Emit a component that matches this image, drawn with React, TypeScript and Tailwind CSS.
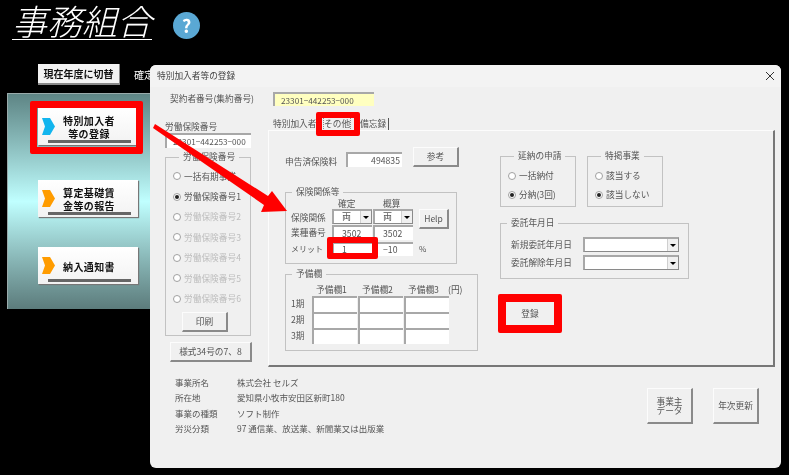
import React from "react";

const raised = "bg-[#f0f0f0] border-t border-l border-t-[#fcfcfc] border-l-[#fcfcfc] border-r-2 border-b-2 border-r-[#8a8a8a] border-b-[#8a8a8a] flex items-center justify-center text-[#555]";
const sunken = "bg-white border-t-2 border-l-2 border-t-[#a8a8a8] border-l-[#a8a8a8] flex items-center text-[#555]";

function Group({ title, className, children }: { title: string; className: string; children?: React.ReactNode }) {
  return (
    <fieldset className={`border border-[#c2c2c2] min-w-0 ${className}`}>
      <legend className="ml-[6px] px-[4px] h-[12px] leading-[12px] text-[8.7px] text-[#555]">{title}</legend>
      {children}
    </fieldset>
  );
}

function Radio({ label, checked, disabled, h = "h-[20.4px]" }: { label: string; checked?: boolean; disabled?: boolean; h?: string }) {
  return (
    <div className={`flex items-center gap-[3px] ${h} text-[8.7px] ${disabled ? "text-[#bdbdbd]" : "text-[#555]"}`}>
      <span className="w-[8px] h-[8px] rounded-full bg-white border border-[#a0a0a0] flex items-center justify-center shrink-0">
        {checked && <span className="w-[4px] h-[4px] rounded-full bg-[#222]" />}
      </span>
      <span className="whitespace-nowrap">{label}</span>
    </div>
  );
}

function Select({ value, className }: { value?: string; className: string }) {
  return (
    <div className={`${sunken} justify-between border-r border-b border-r-[#8a8a8a] border-b-[#8a8a8a] ${className}`}>
      <span className="pl-[8px] text-[9px]">{value}</span>
      <span className="w-[11px] h-full bg-[#f0f0f0] border-l border-[#cfcfcf] flex items-center justify-center">
        <span className="w-0 h-0 border-l-[3px] border-r-[3px] border-t-[3px] border-l-transparent border-r-transparent border-t-black" />
      </span>
    </div>
  );
}

function Input({ value, className, right }: { value?: string; className: string; right?: boolean }) {
  return (
    <div className={`${sunken} ${right ? "justify-end pr-[2px]" : ""} ${className}`}>{value}</div>
  );
}

function MenuButton({ lines, color, className }: { lines: string[]; color: string; className: string }) {
  return (
    <div className={`relative w-[100px] h-[37px] bg-gradient-to-b from-white to-[#f2f2f2] shadow-[1px_1px_1px_#777] ${className}`}>
      <svg className="absolute left-[4px] top-[10px]" width="13" height="17" viewBox="0 0 13 17">
        <polygon points="0,0 8,0 13,8.5 8,17 0,17 3,8.5" fill={color} />
      </svg>
      <div className="absolute left-[24px] top-[6px] w-[54px] h-[26px] flex flex-col items-center justify-center text-[10px] leading-[13px] font-bold text-[#111] tracking-[0.4px]">
        {lines.map((l) => (
          <span key={l} className="whitespace-nowrap">{l}</span>
        ))}
      </div>
      <div className="absolute left-[10px] bottom-[2px] w-[83px] h-[3px] bg-[#666]" />
    </div>
  );
}

export default function App() {
  const reserve = ["1期", "2期", "3期"];
  const cell = "h-[15.5px] mr-[1px] bg-white border-t-2 border-l-2 border-[#a8a8a8]";
  return (
    <div
      className="relative w-[789px] h-[475px] bg-black overflow-hidden blur-[0.35px]"
      style={{ fontFamily: '"Noto Sans CJK JP", "Noto Sans", sans-serif' }}
    >
      {/* App header */}
      <div className="flex items-start pl-[12px] pt-[1px] h-[60px]">
        <div className="border-b border-white text-[35px] leading-[38px] text-white italic font-light whitespace-nowrap">事務組合</div>
        <div className="ml-[21px] mt-[11px] w-[27px] h-[27px] rounded-full bg-[#5aa8d4] flex items-center justify-center text-white font-bold text-[18px]">?</div>
      </div>
      <div className="flex items-center pl-[38px] mt-[4px]">
        <div className="w-[82px] h-[21px] bg-[#f2f2f2] border-b-2 border-r border-[#888] flex items-center justify-center text-[10px] font-bold text-[#111] whitespace-nowrap">現在年度に切替</div>
        <span className="ml-[14px] text-[10px] text-white">確定</span>
      </div>

      {/* Teal menu panel */}
      <div className="absolute left-[7px] top-[93px] w-[150px] h-[216px] bg-gradient-to-b from-[#5e8585] via-[#c0ffff] via-50% to-[#5c7c7c] border-t border-l border-[#9aa]">
        <MenuButton lines={["特別加入者", "等の登録"]} color="#12b5ee" className="ml-[30px] mt-[14px]" />
        <MenuButton lines={["算定基礎賃", "金等の報告"]} color="#ff9c00" className="ml-[30px] mt-[35px]" />
        <MenuButton lines={["納入通知書"]} color="#ff9c00" className="ml-[30px] mt-[30px]" />
      </div>

      {/* Dialog window */}
      <div className="absolute left-[150px] top-[65px] w-[631px] h-[403px] bg-[#f0f0f0] rounded-[6px] text-[#555] overflow-hidden">
        <div className="h-[22px] bg-[#f3f3f3] flex items-center justify-between pl-[7px] pr-[5px]">
          <span className="text-[8.7px] text-[#444]">特別加入者等の登録</span>
          <svg width="10" height="10" viewBox="0 0 10 10" className="mr-[1px]">
            <path d="M1 1 L9 9 M9 1 L1 9" stroke="#333" strokeWidth="1" fill="none" />
          </svg>
        </div>

        <div className="flex items-center h-[14px] mt-[5px] text-[8.7px]">
          <span className="ml-[20px] w-[103px] whitespace-nowrap">契約者番号(集約番号)</span>
          <div className="w-[101px] h-[14px] pl-[6px] bg-[#ffffc0] border-t-2 border-l-2 border-[#a8a8a8] flex items-center text-[8.2px]">23301−442253−000</div>
        </div>

        <div className="flex">
          {/* Left column */}
          <div className="w-[118px] pl-[15px] shrink-0">
            <div className="mt-[14px] h-[13px] leading-[13px] text-[8.7px] whitespace-nowrap">労働保険番号</div>
            <Input value="23301−442253−000" className="w-[86px] h-[15px] text-[8.2px] pl-[6px]" />
            <Group title="労働保険番号" className="mt-[3px] w-[86px] h-[185px] pl-[7px]">
              <div className="pt-[3px]">
                <Radio label="一括有期事業" />
                <Radio label="労働保険番号1" checked />
                <Radio label="労働保険番号2" disabled />
                <Radio label="労働保険番号3" disabled />
                <Radio label="労働保険番号4" disabled />
                <Radio label="労働保険番号5" disabled />
                <Radio label="労働保険番号6" disabled />
              </div>
              <div className={`${raised} ml-[9px] mt-[3px] w-[46px] h-[20px] text-[8.7px]`}>印刷</div>
            </Group>
            <div className={`${raised} ml-[5px] mt-[6px] w-[82px] h-[20px] text-[8.7px] whitespace-nowrap`}>様式34号の7、8</div>
          </div>

          {/* Tabs + panel */}
          <div className="w-[507px] mt-[12px]">
            <div className="flex h-[12px] text-[8.7px] leading-[12px] pl-[5px]">
              <span className="w-[51px] whitespace-nowrap">特別加入者</span>
              <span className="w-[36px] whitespace-nowrap">
                <span className="outline-1 outline-dotted outline-[#888]">その他</span>
              </span>
              <span className="w-[29px] whitespace-nowrap border-r border-[#555]">備忘録</span>
            </div>
            <div className="h-[237px] border-t border-l border-t-[#fcfcfc] border-l-[#fcfcfc] border-r-2 border-b-2 border-r-[#777] border-b-[#777] flex">
              <div className="w-[231px] shrink-0">
                <div className="flex items-start mt-[16px] h-[20px] text-[8.7px]">
                  <span className="ml-[16px] mt-[9px] w-[61px] whitespace-nowrap leading-[12px]">申告済保険料</span>
                  <Input value="494835" right className="mt-[5px] w-[56px] h-[15px] text-[8.7px]" />
                  <div className={`${raised} ml-[11px] w-[46px] h-[20px]`}>参考</div>
                </div>
                <Group title="保険関係等" className="ml-[16px] mt-[19px] w-[172px] h-[78px]">
                  <div className="flex pl-[52px] h-[11px] leading-[11px] text-[8.7px]">
                    <span className="w-[45px]">確定</span>
                    <span>概算</span>
                  </div>
                  <div className="flex items-start pl-[5px] text-[8.7px]">
                    <span className="w-[41px] mt-[3px] leading-[12px]">保険関係</span>
                    <Select value="両" className="w-[40px] h-[15px] mr-[1px]" />
                    <Select value="両" className="w-[40px] h-[15px]" />
                    <div className={`${raised} ml-[6px] w-[30px] h-[20px] text-[8.5px]`}>Help</div>
                  </div>
                  <div className="flex items-center pl-[5px] mt-[-4px] h-[15px] text-[8.7px]">
                    <span className="w-[41px]">業種番号</span>
                    <Input value="3502" className="w-[40px] h-[15px] mr-[1px] pl-[8px]" />
                    <Input value="3502" className="w-[40px] h-[15px] pl-[8px]" />
                  </div>
                  <div className="flex items-center pl-[5px] mt-[1px] h-[15px] text-[8.7px]">
                    <span className="w-[41px] text-[8px]">メリット</span>
                    <Input value="1" className="w-[40px] h-[14px] mr-[1px] pl-[8px]" />
                    <Input value="−10" className="w-[40px] h-[14px] pl-[8px]" />
                    <span className="ml-[6px] text-[8px]">%</span>
                  </div>
                </Group>
                <Group title="予備欄" className="ml-[16px] mt-[4px] w-[193px] h-[83px]">
                  <div className="flex pl-[30px] h-[11px] leading-[11px] text-[8.7px] mt-[4px] whitespace-nowrap">
                    <span className="w-[46px]">予備欄1</span>
                    <span className="w-[46px]">予備欄2</span>
                    <span className="w-[40px]">予備欄3</span>
                    <span>(円)</span>
                  </div>
                  <div className="grid grid-cols-[21px_46px_46px_46px] gap-y-[0.5px] pl-[5px] mt-[1px] text-[8.7px] leading-[15px]">
                    {reserve.map((r) => (
                      <React.Fragment key={r}>
                        <span className="flex items-center">{r}</span>
                        <div className={cell} />
                        <div className={cell} />
                        <div className={cell} />
                      </React.Fragment>
                    ))}
                  </div>
                </Group>
              </div>

              <div className="flex-1">
                <div className="flex mt-[19px] gap-[11px]">
                  <Group title="延納の申請" className="w-[76px] h-[57px] pl-[7px]">
                    <div className="pt-[4px]">
                      <Radio label="一括納付" h="h-[19px]" />
                      <Radio label="分納(3回)" checked h="h-[20px]" />
                    </div>
                  </Group>
                  <Group title="特掲事業" className="w-[76px] h-[57px] pl-[7px]">
                    <div className="pt-[4px]">
                      <Radio label="該当する" h="h-[19px]" />
                      <Radio label="該当しない" checked h="h-[20px]" />
                    </div>
                  </Group>
                </div>
                <Group title="委託年月日" className="mt-[10px] w-[189px] h-[62px]">
                  <div className="flex items-center pl-[10px] mt-[8px] h-[15px] text-[8.7px]">
                    <span className="w-[72px] whitespace-nowrap">新規委託年月日</span>
                    <Select className="w-[96px] h-[15px]" />
                  </div>
                  <div className="flex items-center pl-[10px] mt-[3px] h-[15px] text-[8.7px]">
                    <span className="w-[72px] whitespace-nowrap">委託解除年月日</span>
                    <Select className="w-[96px] h-[15px]" />
                  </div>
                </Group>
                <div className="ml-[6px] mt-[23px] w-[48px] h-[23px] text-[8.7px] bg-[#f0f0f0] flex items-center justify-center">登録</div>
              </div>
            </div>

            <div className="flex justify-end mt-[21px] pr-[16px] gap-[20px]">
              <div className={`${raised} w-[46px] h-[36px] flex-col text-[8.7px] leading-[9px] whitespace-nowrap`}>
                <span>事業主</span>
                <span>データ</span>
              </div>
              <div className={`${raised} w-[46px] h-[36px] text-[8.7px] whitespace-nowrap`}>年次更新</div>
            </div>
          </div>
        </div>

        {/* Business info */}
        <div className="absolute left-[25px] top-[310px] grid grid-cols-[62px_1fr] text-[8.5px] leading-[15.3px] whitespace-nowrap">
          <span>事業所名</span><span>株式会社 セルズ</span>
          <span>所在地</span><span>愛知県小牧市安田区新町180</span>
          <span>事業の種類</span><span>ソフト制作</span>
          <span>労災分類</span><span>97 通信業、放送業、新聞業又は出版業</span>
        </div>
      </div>

      {/* Red annotations */}
      <div className="absolute left-[30px] top-[101px] w-[113px] h-[53px] border-[7px] border-[#ff0000] rounded-[2px]" />
      <div className="absolute left-[316px] top-[112px] w-[44px] h-[24px] border-[6px] border-[#ff0000] rounded-[2px]" />
      <div className="absolute left-[327px] top-[237px] w-[51px] h-[22px] border-[6px] border-[#ff0000] rounded-[2px]" />
      <div className="absolute left-[498px] top-[294px] w-[64px] h-[39px] border-[8px] border-[#ff0000] rounded-[2px]" />
      <svg className="absolute left-[150px] top-[120px]" width="140" height="105" viewBox="0 0 140 105">
        <polygon points="3,8 5,4 118,76 122,71 137,91 111,92 114,85" fill="#ff0000" />
      </svg>
    </div>
  );
}
